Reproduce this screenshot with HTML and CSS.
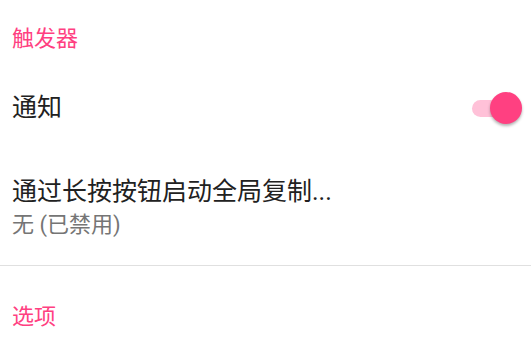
FILE: index.html
```html
<!DOCTYPE html>
<html>
<head>
<meta charset="utf-8">
<link rel="stylesheet" href="styles.css">
</head>
<body>
<div class="category first">触发器</div>
<div class="pref switch-row">
  <div class="title">通知</div>
  <div class="switch on"><div class="track"></div><div class="thumb"></div></div>
</div>
<div class="pref two-line">
  <div class="title">通过长按按钮启动全局复制...</div>
  <div class="summary">无 (已禁用)</div>
</div>
<div class="divider"></div>
<div class="category second">选项</div>
</body>
</html>
```
FILE: styles.css
```css
html, body {
  margin: 0;
  padding: 0;
  background: #ffffff;
}
body {
  width: 531px;
  height: 350px;
  overflow: hidden;
  font-family: Roboto, "Noto Sans CJK SC", sans-serif;
}
.category {
  color: #ff4081;
  font-size: 22px;
  line-height: 26px;
  padding: 0 12px;
}
.category.first {
  padding-top: 26px;
  padding-bottom: 12px;
}
.category.second {
  padding-top: 38px;
}
.pref {
  padding: 0 12px;
}
.title {
  color: #212121;
  font-size: 25px;
  line-height: 30px;
}
.summary {
  color: #757575;
  font-size: 22px;
  line-height: 30px;
  margin-top: 3px;
}
.switch-row {
  height: 88px;
  display: flex;
  align-items: center;
  justify-content: space-between;
  padding-right: 9px;
}
.two-line {
  padding-top: 25px;
  padding-bottom: 25px;
}
.divider {
  height: 1px;
  background: #e0e0e0;
}
.switch {
  position: relative;
  width: 50px;
  height: 32px;
  display: flex;
  align-items: center;
}
.track {
  width: 48px;
  height: 17px;
  border-radius: 9px;
  background: #ffc1d8;
}
.thumb {
  position: absolute;
  right: 0;
  top: 0;
  width: 32px;
  height: 32px;
  border-radius: 50%;
  background: #ff4081;
  box-shadow: 0 2px 3px rgba(0,0,0,0.3);
}
```
